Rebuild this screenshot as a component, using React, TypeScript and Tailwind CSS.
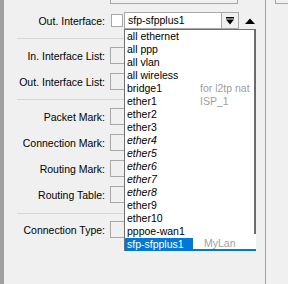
import React from "react";

type Item = { name: string; comment?: string; italic?: boolean };

const ITEMS: Item[] = [
  { name: "all ethernet" },
  { name: "all ppp" },
  { name: "all vlan" },
  { name: "all wireless" },
  { name: "bridge1", comment: "for l2tp nat" },
  { name: "ether1", comment: "ISP_1" },
  { name: "ether2" },
  { name: "ether3" },
  { name: "ether4", italic: true },
  { name: "ether5", italic: true },
  { name: "ether6", italic: true },
  { name: "ether7", italic: true },
  { name: "ether8", italic: true },
  { name: "ether9" },
  { name: "ether10" },
  { name: "pppoe-wan1" },
];

function Label({ text }: { text: string }) {
  return <div className="w-[101px] shrink-0 text-right leading-[13px] pt-[2px]">{text}</div>;
}

function EmptyRow({ label, mt }: { label: string; mt: string }) {
  return (
    <div className={`flex h-[17px] items-center ${mt}`}>
      <Label text={label} />
      <div className="ml-[5px] h-[17px] w-[128px] border border-[#a8a8a8] bg-[#f0f0f0]" />
    </div>
  );
}

function Separator({ mt }: { mt: string }) {
  return <div className={`ml-[13px] h-px w-[221px] bg-[#d6d6d6] ${mt}`} />;
}

export default function App() {
  return (
    <div className="relative flex h-[284px] w-[288px] overflow-hidden bg-[#f0f0f0] font-['Liberation_Sans',Arial,sans-serif] text-[10.5px] text-black">
      {/* left window edge */}
      <div className="w-[4px] shrink-0 bg-[#a0a0a0]" />

      {/* form */}
      <div className="flex w-[261px] shrink-0 flex-col">
        <div className="ml-[106px] h-[4px] w-[128px] border-x border-b border-[#a8a8a8]" />

        {/* Out. Interface */}
        <div className="mt-[8px] flex h-[17px] items-center">
          <Label text="Out. Interface:" />
          <div className="ml-[6px] h-[13px] w-[12px] border border-[#a8a8a8] bg-white" />
          <div className="ml-[1px] flex h-[17px] w-[98px] items-center border border-[#a8a8a8] bg-white pl-[3px] leading-[13px]">
            sfp-sfpplus1
          </div>
          <div className="flex h-[17px] w-[17px] items-center justify-center border-y border-r border-[#a8a8a8]">
            <svg width="8" height="8" viewBox="0 0 8 8">
              <rect x="0" y="0" width="8" height="1.5" fill="#000" />
              <path d="M0 2.5 H8 L4 7.5 Z" fill="#000" />
            </svg>
          </div>
          <svg className="ml-[6px]" width="10" height="6" viewBox="0 0 10 6">
            <path d="M0 6 L5 0.5 L10 6 Z" fill="#000" />
          </svg>
        </div>

        <Separator mt="mt-[9px]" />
        <EmptyRow label="In. Interface List:" mt="mt-[8px]" />
        <EmptyRow label="Out. Interface List:" mt="mt-[9px]" />
        <Separator mt="mt-[9px]" />
        <EmptyRow label="Packet Mark:" mt="mt-[8px]" />
        <EmptyRow label="Connection Mark:" mt="mt-[9px]" />
        <EmptyRow label="Routing Mark:" mt="mt-[9px]" />
        <EmptyRow label="Routing Table:" mt="mt-[9px]" />
        <Separator mt="mt-[10px]" />
        <EmptyRow label="Connection Type:" mt="mt-[7px]" />
      </div>

      {/* right divider */}
      <div className="w-px shrink-0 bg-[#a0a0a0]" />
      <div className="flex-1 pl-[9px]">
        <div className="h-[4px] border-b border-l border-[#a8a8a8]" />
      </div>

      {/* dropdown list */}
      <div className="absolute left-[124px] top-[29px] w-[132px] border-l border-t border-[#707070] bg-white leading-[13px]">
        {ITEMS.map((it) => (
          <div key={it.name} className="flex h-[13px] items-center">
            <span className={`w-[75px] shrink-0 pl-[2px] ${it.italic ? "italic" : ""}`}>{it.name}</span>
            <span className="text-[#a0a0a0]">{it.comment}</span>
          </div>
        ))}
        <div className="flex h-[13px] items-center border-b-2 border-[#0078d7]">
          <span className="h-[12px] w-[68px] bg-[#0078d7] pl-[2px] text-white">sfp-sfpplus1</span>
          <span className="ml-[11px] text-[#a0a0a0]">MyLan</span>
        </div>
        <div className="absolute right-0 top-0 h-[204px] w-[2px] bg-[#6a6a6a]" />
      </div>
    </div>
  );
}
